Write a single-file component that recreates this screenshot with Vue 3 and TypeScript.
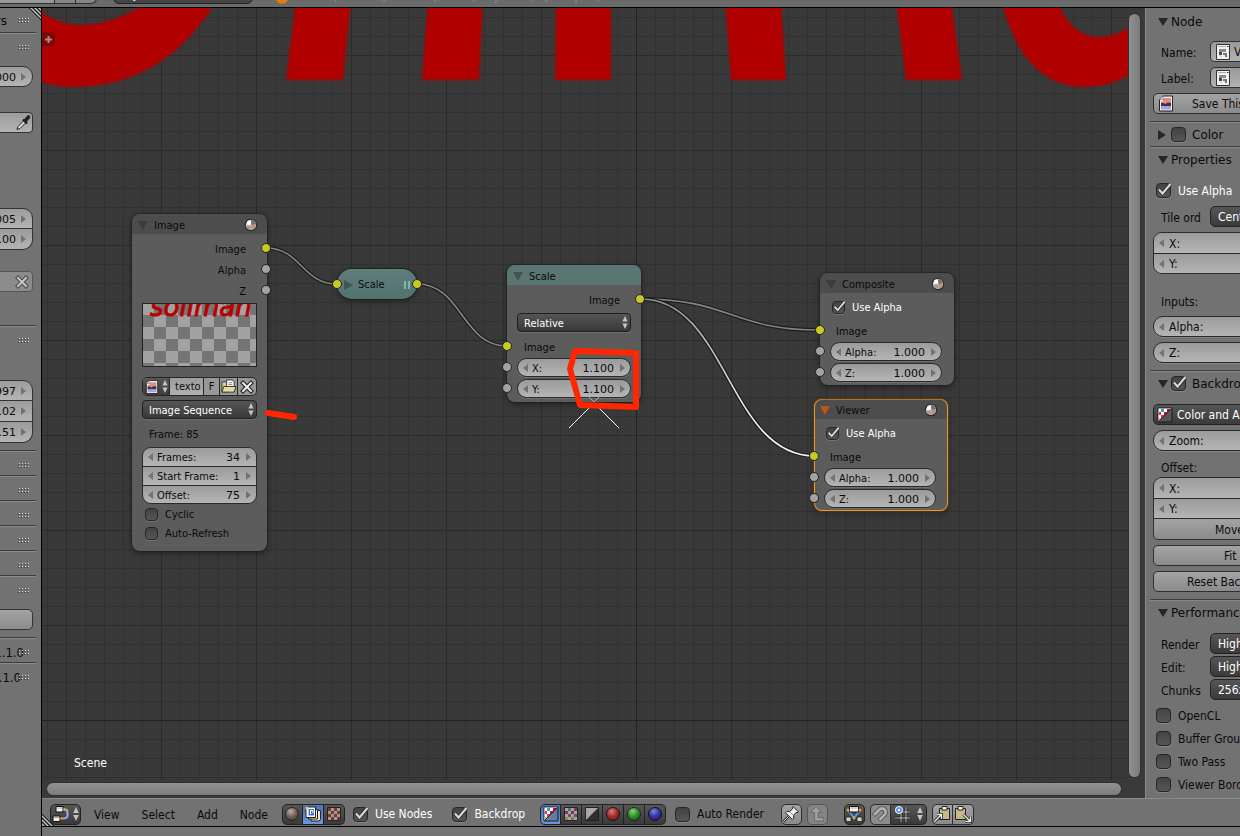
<script setup lang="ts">
import { reactive, ref } from 'vue'

interface NumField { id: string; label: string; value: string }

const leftTop = ref('1.000')
const leftPair = reactive<string[]>(['0.005', '6.00'])
const leftTriple = reactive<string[]>(['0.997', '4.02', '1.51'])
const emptySections = [1, 2, 3, 4, 5]

const nodes = {
  image: { x: 90, y: 206 },
  collapsed: { x: 295, y: 261 },
  scale: { x: 465, y: 257 },
  composite: { x: 778, y: 265 },
  viewer: { x: 772, y: 391 },
}
const at = (p: { x: number; y: number }) => ({ left: p.x + 'px', top: p.y + 'px' })

const sequence = reactive<NumField[]>([
  { id: 'frames', label: 'Frames:', value: '34' },
  { id: 'start', label: 'Start Frame:', value: '1' },
  { id: 'offset', label: 'Offset:', value: '75' },
])
const scale = reactive<NumField[]>([
  { id: 'sx', label: 'X:', value: '1.100' },
  { id: 'sy', label: 'Y:', value: '1.100' },
])
const outputs = reactive([
  {
    id: 'composite', title: 'Composite', pos: nodes.composite, active: false, alpha: true,
    fields: [
      { id: 'ca', label: 'Alpha:', value: '1.000' },
      { id: 'cz', label: 'Z:', value: '1.000' },
    ],
  },
  {
    id: 'viewer', title: 'Viewer', pos: nodes.viewer, active: true, alpha: true,
    fields: [
      { id: 'va', label: 'Alpha:', value: '1.000' },
      { id: 'vz', label: 'Z:', value: '1.000' },
    ],
  },
])
const links = [
  'M266 248C301 248 302 284 337 284',
  'M417 284C462 284 462 346 507 346',
  'M641 299C731 299 731 330 820 330',
  'M641 299C727 299 728 456 815 456',
]
const cyclic = ref(false)
const autoRefresh = ref(false)
const flags = reactive([
  { id: 'opencl', label: 'OpenCL', on: false },
  { id: 'buffer', label: 'Buffer Groups', on: false },
  { id: 'twopass', label: 'Two Pass', on: false },
  { id: 'border', label: 'Viewer Border', on: false },
])
const perf = [
  { id: 'render', label: 'Render', value: 'High' },
  { id: 'edit', label: 'Edit:', value: 'High' },
  { id: 'chunks', label: 'Chunks', value: '256x256' },
]
const menus = ['View', 'Select', 'Add', 'Node']
const channels = ['i-coloralpha', 'i-color', 'i-alpha', 'i-red', 'i-green', 'i-blue']
const treeTypes = ['i-material', 'i-compositing', 'i-texture']
const useNodes = ref(true)
const backdrop = ref(true)
const autoRender = ref(false)
const propAlpha = ref(true)
const panelColor = ref(false)
const panelBackdrop = ref(true)
</script>

<template>
  <div class="app">
    <svg class="defs" aria-hidden="true">
      <defs>
        <radialGradient id="g-mat" cx=".4" cy=".3" r=".8"><stop offset="0" stop-color="#b9aca6" /><stop offset=".5" stop-color="#7a625b" /><stop offset="1" stop-color="#3a2f2d" /></radialGradient>
        <radialGradient id="g-red" cx=".4" cy=".3" r=".8"><stop offset="0" stop-color="#d87a7a" /><stop offset=".5" stop-color="#a03030" /><stop offset="1" stop-color="#601616" /></radialGradient>
        <radialGradient id="g-green" cx=".4" cy=".3" r=".8"><stop offset="0" stop-color="#86d07a" /><stop offset=".5" stop-color="#31902e" /><stop offset="1" stop-color="#155a15" /></radialGradient>
        <radialGradient id="g-blue" cx=".4" cy=".3" r=".8"><stop offset="0" stop-color="#8080dc" /><stop offset=".5" stop-color="#3636a0" /><stop offset="1" stop-color="#1a1a60" /></radialGradient>
        <pattern id="p-checker" width="24" height="24" patternUnits="userSpaceOnUse"><rect width="24" height="24" fill="#a2a2a2" /><path d="M12 0h12v12H12zM0 12h12v12H0z" fill="#757575" /></pattern>
        <symbol id="i-ball" viewBox="0 0 14 14"><circle cx="7" cy="7" r="5.700" fill="#e9e5e2" stroke="#2a2a2a" stroke-width="1.200" /><path d="M7.500 7.200 12 6c.2 3-1.600 5.300-4.500 5.800z" fill="#c88a78" /><path d="M7.300 1.600C10 1.600 12 3.500 12.300 6L7.500 7.200C6.800 5 6.800 3 7.300 1.600z" fill="#7b7471" /><path d="M1.700 7.500 7.500 7.200V12C4.500 12.200 2 10.500 1.700 7.500z" fill="#a39c98" /><circle cx="5" cy="4.500" r="2" fill="#fff" /></symbol>
        <symbol id="i-updown" viewBox="0 0 6 14"><path d="M3 0 5.800 6H.2zM3 14 .2 8h5.600z" fill="#c4c4c4" /></symbol>
        <symbol id="i-image" viewBox="0 0 16 16"><path d="M5 .5h9.500v15h-13V4z" fill="#f4f0f0" stroke="#2a2020" /><path d="M5 2.500h8v6H3V6h2z" fill="#dd8f84" /><path d="M3 7.500h2.500l2 1 2-1.500 3.500 .5v3.500H3z" fill="#3d3350" /><path d="M3 10.500h10V14H3z" fill="#a5a5dc" /><path d="M1.500 4H5V.5z" fill="#fff" stroke="#555" stroke-width=".6" /></symbol>
        <symbol id="i-folder" viewBox="0 0 18 16"><path d="M2 3h5l1 2v9H2z" fill="#d9cc8e" stroke="#3b3520" /><path d="M7 1h6l2 2v9H7z" fill="#fff" stroke="#333" /><path d="M9 4h4M9 6h4" stroke="#777" /><path d="M4 8h13l-2 6H2z" fill="#e5d9a2" stroke="#3b3520" /></symbol>
        <symbol id="i-x" viewBox="0 0 14 14"><path d="M3 3 11 11M11 3 3 11" stroke="#222" stroke-width="4.200" stroke-linecap="square" /><path d="M3 3 11 11M11 3 3 11" stroke="#eee" stroke-width="2" stroke-linecap="square" /></symbol>
        <symbol id="i-node" viewBox="0 0 16 16"><path d="M1.500 .5h13v15h-13z" fill="#f2f2f2" stroke="#333" /><path d="M3 2.500h8" stroke="#aaa" /><path d="M12 2.500h1.500" stroke="#333" /><path d="M4 5h7v3H4z" fill="#8a8a8a" /><path d="M4 8h3v3H4z" fill="#444" /><path d="M8 9h4v4H10v-2H8z" fill="#777" /><path d="M4 11l3 2" stroke="#ccc" /></symbol>
        <symbol id="i-material" viewBox="0 0 16 16"><circle cx="8" cy="8" r="6.500" fill="url(#g-mat)" stroke="#262020" /></symbol>
        <symbol id="i-compositing" viewBox="0 0 16 16"><path d="M6 4.500h9.500v9L14 15H6z" fill="#ebe4c8" stroke="#222" /><path d="M3.500 3.500h9V13h-9z" fill="#f5f0dc" stroke="#222" /><path d="M1 1h9.500v10.500H1z" fill="#fff" stroke="#222" /><path d="M3.500 3h5.500v6.500H3.500z" fill="#3d77cc" /><path d="M5.500 8V4.500H8V7" stroke="#fff" fill="none" /><circle cx="2" cy="2" r="1.600" fill="#ffc845" /></symbol>
        <symbol id="i-texture" viewBox="0 0 16 16"><path d="M1.500 1.500h13v13h-13z" fill="#a59690" stroke="#2a2020" /><path d="M2 2h3v3H2zM8 2h3v3H8zM5 5h3v3H5zM11 5h3v3h-3zM2 8h3v3H2zM8 8h3v3H8zM5 11h3v3H5zM11 11h3v3h-3z" fill="#753c36" /></symbol>
        <symbol id="i-coloralpha" viewBox="0 0 16 16"><path d="M1 1h14v14H1z" fill="#6a6a6a" fill-opacity=".45" stroke="#1c1c1c" /><path d="M1.500 1.500h13l-13 13z" fill="#fff" /><path d="M4 2h3v3H4z" fill="#2fa0c8" /><path d="M10 2h3v1l-2 2h-1zM7 5h3v1L8 8H7z" fill="#c8102e" /><path d="M2 5h2v3H2z" fill="#d33" /><path d="M4 8h3v1l-2 2H4z" fill="#e03050" /><path d="M2 11h2l-2 2z" fill="#e0a020" /><path d="M14.500 1.500l-13 13" stroke="#222" /></symbol>
        <symbol id="i-color" viewBox="0 0 16 16"><path d="M1.500 1.500h13v13h-13z" fill="#a5a5a5" stroke="#262626" /><path d="M5 2h3v3H5z" fill="#3c7b90" /><path d="M11 2h3v3h-3zM8 5h3v3H8zM2 5h3v3H2z" fill="#90304a" /><path d="M5 8h3v3H5zM11 8h3v3h-3z" fill="#6b4d78" /><path d="M2 11h3v3H2z" fill="#a8823e" /><path d="M8 11h3v3H8z" fill="#74863a" /></symbol>
        <symbol id="i-alpha" viewBox="0 0 16 16"><path d="M1.500 1.500h13v13h-13z" fill="#2f2f2f" stroke="#222" /><path d="M2 2h12L2 14z" fill="#a9a9a9" /></symbol>
        <symbol id="i-red" viewBox="0 0 16 16"><circle cx="8" cy="8" r="6.500" fill="url(#g-red)" stroke="#2a1010" /></symbol>
        <symbol id="i-green" viewBox="0 0 16 16"><circle cx="8" cy="8" r="6.500" fill="url(#g-green)" stroke="#102a10" /></symbol>
        <symbol id="i-blue" viewBox="0 0 16 16"><circle cx="8" cy="8" r="6.500" fill="url(#g-blue)" stroke="#10102a" /></symbol>
        <symbol id="i-nodetree" viewBox="0 0 18 18"><path d="M11 4.500h2q2.500 0 2.500 3v3q0 3-5 3" fill="none" stroke="#94b4ea" stroke-width="2" /><path d="M4 1.500h7v5.500H4zM1 11h7v5.500H1z" fill="#eee" stroke="#111" /><path d="M5 3h5M2 12.500h5" stroke="#aaa" /><circle cx="12.500" cy="4.500" r="1.300" fill="#f5a21c" /><circle cx="9.500" cy="13.500" r="1.300" fill="#f5a21c" /></symbol>
        <symbol id="i-pin" viewBox="0 0 18 18"><path d="M1.500 16.500 7 11" stroke="#222" stroke-width="2.400" /><path d="M1.500 16.500 7 11" stroke="#ddd" /><path d="M11 1.500 16.500 7l-1.500.8-1-.3-2.500 3 .3 2.500-1.500 1.500L3.500 7.800 5 6.300l2.500.3 3-2.600-.3-1.200z" fill="#ededed" stroke="#222" /><path d="m8 7 3 3" stroke="#999" /></symbol>
        <symbol id="i-up" viewBox="0 0 18 18"><path d="M8 1.500 13.500 7.500H10v5h5.500v3.500H6.500v-8.500h-4z" fill="#a0a0a0" stroke="#696969" /></symbol>
        <symbol id="i-insert" viewBox="0 0 18 18"><path d="M3 5l6 8 6-8" fill="none" stroke="#5d94e8" stroke-width="2" /><path d="M4.500 1.500h9v5.500h-9z" fill="#f1f1f1" stroke="#111" /><path d="M6 3h6" stroke="#aaa" /><path d="M1 12h5v4.500H1zM12 12h5v4.500h-5z" fill="#cfcfcf" stroke="#222" stroke-width=".8" /><circle cx="3" cy="5" r="1.500" fill="#f5a21c" /><circle cx="15" cy="5" r="1.500" fill="#f5a21c" /><circle cx="9" cy="13" r="1.400" fill="#f5a21c" /></symbol>
        <symbol id="i-magnet" viewBox="0 0 18 18"><path d="M2.500 10.500 8 5c4-4 9 1 5.500 5L8 15.500" fill="none" stroke="#555" stroke-width="4.500" /><path d="M3 10 8 5c4-4 9 1 5.500 5L8.500 15" fill="none" stroke="#b4b4b4" stroke-width="2.500" /></symbol>
        <symbol id="i-snap" viewBox="0 0 18 18"><path d="M8 2v15M13 2v15M2 7h15M2 13h15" stroke="#111" stroke-width="2.400" /><path d="M8 2v15M13 2v15M2 7h15M2 13h15" stroke="#ccc" /><circle cx="6" cy="5" r="3.500" fill="#4a8ae8" stroke="#fff" /><circle cx="6" cy="5" r="1.300" fill="#fff" /></symbol>
        <symbol id="i-copy" viewBox="0 0 18 18"><path d="M6.500 3.500h10v11h-10z" fill="#c9b98a" stroke="#222" /><path d="M9 1.500h5v3.500H9z" fill="#f4f4f4" stroke="#222" /><path d="M1.500 16.500 8 10M4 9.500h4.500V14" fill="none" stroke="#222" stroke-width="3" /><path d="M1.500 16.500 8 10M4 9.500h4.500V14" fill="none" stroke="#f0f0f0" stroke-width="1.400" /></symbol>
        <symbol id="i-paste" viewBox="0 0 18 18"><path d="M1.500 3.500h10v11h-10z" fill="#c9b98a" stroke="#222" /><path d="M4 1.500h5v3.500H4z" fill="#f4f4f4" stroke="#222" /><path d="M9.500 9.500 16 16M16.500 11.500V16.500H11.500" fill="none" stroke="#222" stroke-width="3" /><path d="M9.500 9.500 16 16M16.500 11.500V16.500H11.500" fill="none" stroke="#f0f0f0" stroke-width="1.400" /></symbol>
        <symbol id="i-dropper" viewBox="0 0 16 16"><path d="M2 14.500 3 11.500 9 5.500l2 2-6 6z" fill="#ddd" stroke="#222" /><path d="m8 4.500 4 4" stroke="#111" stroke-width="2.200" /><path d="m10.500 5.500 3-3.500" stroke="#222" stroke-width="3.600" stroke-linecap="round" /></symbol>
        <symbol id="i-hatch" viewBox="0 0 12 12"><path d="M0 0 12 12M4 0 12 8M8 0 12 4" stroke="#1c1c1c" /><path d="M2 0 12 10M6 0 12 6M10 0 12 2" stroke="#c6c6c6" /></symbol>
        <symbol id="i-hatch-low" viewBox="0 0 12 12"><path d="M0 0 12 12M0 4 8 12M0 8 4 12" stroke="#1c1c1c" /><path d="M0 2 10 12M0 6 6 12M0 10 2 12" stroke="#c6c6c6" /></symbol>
        <symbol id="i-grip" viewBox="0 0 12 6"><path d="M0 1.500h11M0 4.500h11" stroke="#3a3a3a" stroke-dasharray="1 2" /><path d="M1 .5h11M1 3.500h11" stroke="#d6d6d6" stroke-dasharray="1 2" /></symbol>
        <symbol id="i-check" viewBox="0 0 18 18"><path d="M4 8.500 7.500 12.500 15.500 3" fill="none" stroke="#222" stroke-width="3.600" /><path d="M4 8.500 7.500 12.500 15.500 3" fill="none" stroke="#d8d8d8" stroke-width="2.200" /></symbol>
      </defs>
    </svg>

    <header class="top">
      <div class="top-row">
        <span class="t-scene"></span><span class="t-btn"></span><span class="t-btn t-end"></span>
        <span class="t-engine">Cycles Render</span>
        <span class="t-logo"></span>
        <span class="t-info">v2.77 | Verts:0 | Faces:0 | Tris:0 | Objects:0/2 | Lamps:0/1</span>
      </div>
    </header>

    <div class="body">
      <aside class="left">
        <svg class="hatch" width="12" height="12"><use href="#i-hatch" /></svg>
        <div class="left-in">
          <div class="sec first"><span class="big">rs</span><svg class="grip" width="12" height="6"><use href="#i-grip" /></svg></div>
          <div class="sec"><svg class="grip" width="12" height="6"><use href="#i-grip" /></svg></div>
          <div class="lgroup a"><div class="lnum"><input v-model="leftTop" aria-label="Value" /><i class="ar"></i></div></div>
          <div class="lgroup b"><div class="lnum flat"><svg width="16" height="16"><use href="#i-dropper" /></svg></div></div>
          <div class="lgroup c">
            <div v-for="(v, i) in leftPair" :key="i" class="lnum"><input v-model="leftPair[i]" aria-label="Value" /><i class="ar"></i></div>
          </div>
          <div class="lgroup d"><div class="lnum flat faded"><svg width="14" height="14"><use href="#i-x" /></svg></div></div>
          <div class="sec"><svg class="grip" width="12" height="6"><use href="#i-grip" /></svg></div>
          <div class="lgroup e">
            <div v-for="(v, i) in leftTriple" :key="i" class="lnum"><input v-model="leftTriple[i]" aria-label="Value" /><i class="ar"></i></div>
          </div>
          <div v-for="n in emptySections" :key="n" class="sec"><svg class="grip" width="12" height="6"><use href="#i-grip" /></svg></div>
          <div class="sec"><svg class="grip" width="12" height="6"><use href="#i-grip" /></svg></div>
          <div class="lgroup f"><button class="lbtn" aria-label="Add"></button></div>
          <div class="sec"><span class="ver">1.1.0</span><svg class="grip" width="12" height="6"><use href="#i-grip" /></svg></div>
          <div class="sec"><span class="ver v2">1.1.0</span><svg class="grip" width="12" height="6"><use href="#i-grip" /></svg></div>
        </div>
      </aside>

      <section class="editor">
        <div class="work">
          <div class="canvas">
            <div class="viewport">
              <svg class="layer">
                <g transform="translate(-42 -8)">
                  <path d="M636.500 0v900M0 720.500h1400" stroke="#232323" fill="none" />
                  <g class="backdrop">
                    <path d="M30 0H42V12C64 29 96 31 139 8L150 0H218L212 8C182 54 138 87 73 87Q54 87 30 79z" />
                    <path d="M296 0h55l-8 80h-57zM428 0h55l-4 80h-57zM556 0h55v80h-56zM725 0h56l5 80h-55zM896 0h55l11 80h-56z" />
                    <path d="M1001 0h56C1066 26 1084 38 1101 37Q1120 36 1140 20V68Q1114 87 1086 87C1038 87 1014 50 1001 0z" />
                  </g>
                </g>
              </svg>
              <button class="plus" aria-label="Show tool shelf">
                <svg width="9" height="9"><path d="M4.500 1v7M1 4.500h7" stroke="#b98484" stroke-width="2" /></svg>
              </button>

              <svg class="layer">
                <defs>
                  <linearGradient id="g-link" gradientUnits="userSpaceOnUse" x1="641" y1="299" x2="760" y2="420"><stop offset="0" stop-color="#8a8a8a" /><stop offset="1" stop-color="#f6f6f6" /></linearGradient>
                </defs>
                <g transform="translate(-42 -8)" fill="none">
                  <g v-for="(d, i) in links" :key="d">
                    <path :d="d" stroke="#1d1d1d" stroke-width="4" />
                    <path :d="d" :stroke="i === 3 ? 'url(#g-link)' : '#858585'" stroke-width="1.600" />
                  </g>
                </g>
              </svg>

              <article class="node wide" :style="at(nodes.image)">
                <h2 class="nhead"><i class="tri"></i>Image<svg class="ball" width="14" height="14"><use href="#i-ball" /></svg></h2>
                <div class="nbody image-body">
                  <div class="sock-row out">Image<i class="sock o y"></i></div>
                  <div class="sock-row out">Alpha<i class="sock o"></i></div>
                  <div class="sock-row out">Z<i class="sock o"></i></div>
                  <svg class="preview" width="115" height="64">
                    <rect width="115" height="64" fill="url(#p-checker)" />
                    <text x="8" y="13" class="thumb">soliman</text>
                    <rect x=".5" y=".5" width="114" height="63" fill="none" stroke="#222" />
                  </svg>
                  <div class="idrow">
                    <button class="dark" aria-label="Browse image"><svg width="14" height="14"><use href="#i-image" /></svg><svg width="6" height="13"><use href="#i-updown" /></svg></button>
                    <input value="texto" aria-label="Image name" />
                    <button class="fbtn">F</button>
                    <button aria-label="Open"><svg width="17" height="15"><use href="#i-folder" /></svg></button>
                    <button aria-label="Unlink"><svg width="14" height="14"><use href="#i-x" /></svg></button>
                  </div>
                  <div class="menu seq">
                    <select aria-label="Source"><option>Image Sequence</option></select>
                    <svg width="6" height="13"><use href="#i-updown" /></svg>
                  </div>
                  <p class="frame">Frame: 85</p>
                  <div class="stack">
                    <label v-for="f in sequence" :key="f.id" class="num"><i class="al"></i><span>{{ f.label }}</span><input v-model="f.value" /><i class="ar"></i></label>
                  </div>
                  <label class="check"><span class="box"><input v-model="cyclic" type="checkbox" /><svg><use href="#i-check" /></svg></span>Cyclic</label>
                  <label class="check"><span class="box"><input v-model="autoRefresh" type="checkbox" /><svg><use href="#i-check" /></svg></span>Auto-Refresh</label>
                </div>
              </article>

              <article class="pill" :style="at(nodes.collapsed)">
                <i class="sock l y"></i><i class="tri side"></i><span>Scale</span><i class="bars"></i><i class="sock r y"></i>
              </article>

              <article class="node" :style="at(nodes.scale)">
                <h2 class="nhead teal"><i class="tri"></i>Scale</h2>
                <div class="nbody scale-body">
                  <div class="sock-row out">Image<i class="sock o y"></i></div>
                  <div class="menu">
                    <select aria-label="Space"><option>Relative</option></select>
                    <svg width="6" height="13"><use href="#i-updown" /></svg>
                  </div>
                  <div class="sock-row in">Image<i class="sock i y"></i></div>
                  <div v-for="f in scale" :key="f.id" class="sock-row">
                    <label class="num round"><i class="al"></i><span>{{ f.label }}</span><input v-model="f.value" /><i class="ar"></i></label>
                    <i class="sock i"></i>
                  </div>
                </div>
              </article>

              <article v-for="n in outputs" :key="n.id" class="node" :class="{ active: n.active }" :style="at(n.pos)">
                <h2 class="nhead"><i class="tri"></i>{{ n.title }}<svg class="ball" width="14" height="14"><use href="#i-ball" /></svg></h2>
                <div class="nbody out-body">
                  <label class="check white"><span class="box"><input v-model="n.alpha" type="checkbox" /><svg><use href="#i-check" /></svg></span>Use Alpha</label>
                  <div class="sock-row in">Image<i class="sock i y"></i></div>
                  <div v-for="f in n.fields" :key="f.id" class="sock-row">
                    <label class="num round"><i class="al"></i><span>{{ f.label }}</span><input v-model="f.value" /><i class="ar"></i></label>
                    <i class="sock i"></i>
                  </div>
                </div>
              </article>

              <svg class="layer">
                <g transform="translate(-42 -8)" fill="none">
                  <path d="M569 428 594 403 619 428" stroke="#fff" />
                  <path d="M589 397 594 402 599 397" stroke="#aaa" />
                  <path d="M575 351 636 353V407L580 405 570 369z" stroke="#ff2600" stroke-width="6" stroke-linejoin="round" />
                  <path d="M268 413 294 417" stroke="#ff2600" stroke-width="6" stroke-linecap="round" />
                </g>
              </svg>
              <span class="scene">Scene</span>
            </div>
            <div class="hscroll"><div class="hbar"></div></div>
          </div>
          <div class="vscroll"><div class="vbar"></div></div>

          <aside class="props">
            <div class="props-in">
              <section class="panel">
                <h3><i class="ptri"></i>Node</h3>
                <div class="pbody p1">
                  <label class="prow"><span>Name:</span><span class="tfield"><svg width="16" height="16"><use href="#i-node" /></svg><input value="Viewer" /></span></label>
                  <label class="prow"><span>Label:</span><span class="tfield"><svg width="16" height="16"><use href="#i-node" /></svg><input value="" /></span></label>
                  <button class="pbtn save"><svg width="16" height="17"><use href="#i-image" /></svg>Save This</button>
                </div>
              </section>
              <section class="panel">
                <h3><i class="ptri closed"></i><label class="check head"><span class="box"><input v-model="panelColor" type="checkbox" /><svg><use href="#i-check" /></svg></span>Color</label></h3>
              </section>
              <section class="panel">
                <h3><i class="ptri"></i>Properties</h3>
                <div class="pbody">
                  <label class="check white"><span class="box"><input v-model="propAlpha" type="checkbox" /><svg><use href="#i-check" /></svg></span>Use Alpha</label>
                  <label class="prow"><span>Tile ord</span><select class="psel"><option>Center</option></select></label>
                  <div class="stack">
                    <label class="num"><i class="al"></i><span>X:</span><input value="" /></label>
                    <label class="num"><i class="al"></i><span>Y:</span><input value="" /></label>
                  </div>
                  <p class="ptext inputs">Inputs:</p>
                  <label class="num round"><i class="al"></i><span>Alpha:</span><input value="" /></label>
                  <label class="num round"><i class="al"></i><span>Z:</span><input value="" /></label>
                </div>
              </section>
              <section class="panel">
                <h3><i class="ptri"></i><label class="check head"><span class="box"><input v-model="panelBackdrop" type="checkbox" /><svg><use href="#i-check" /></svg></span>Backdrop</label></h3>
                <div class="pbody">
                  <div class="iconsel"><svg width="16" height="16"><use href="#i-coloralpha" /></svg><select aria-label="Channels"><option>Color and Alpha</option></select></div>
                  <label class="num round"><i class="al"></i><span>Zoom:</span><input value="" /></label>
                  <div>
                    <p class="ptext">Offset:</p>
                    <div class="stack open">
                      <label class="num"><i class="al"></i><span>X:</span><input value="" /></label>
                      <label class="num"><i class="al"></i><span>Y:</span><input value="" /></label>
                    </div>
                    <button class="pbtn move">Move</button>
                  </div>
                  <button class="pbtn fit">Fit</button>
                  <button class="pbtn reset">Reset Backdrop</button>
                </div>
              </section>
              <section class="panel">
                <h3><i class="ptri"></i>Performance</h3>
                <div class="pbody tight">
                  <label v-for="p in perf" :key="p.id" class="prow"><span>{{ p.label }}</span><select class="psel"><option>{{ p.value }}</option></select></label>
                  <div class="flags">
                    <label v-for="f in flags" :key="f.id" class="check"><span class="box"><input v-model="f.on" type="checkbox" /><svg><use href="#i-check" /></svg></span>{{ f.label }}</label>
                  </div>
                </div>
              </section>
            </div>
          </aside>
        </div>

        <nav class="toolbar">
          <svg class="hatch low" width="12" height="12"><use href="#i-hatch-low" /></svg>
          <button class="tb dark editor-type" aria-label="Editor type"><svg width="18" height="18"><use href="#i-nodetree" /></svg><svg width="6" height="14"><use href="#i-updown" /></svg></button>
          <div class="menus"><button v-for="m in menus" :key="m">{{ m }}</button></div>
          <div class="group">
            <button v-for="(t, i) in treeTypes" :key="t" class="tb dark" :class="{ on: i === 1 }" :aria-label="t.slice(2)"><svg width="16" height="16"><use :href="'#' + t" /></svg></button>
          </div>
          <label class="check white c1"><span class="box"><input v-model="useNodes" type="checkbox" /><svg><use href="#i-check" /></svg></span>Use Nodes</label>
          <label class="check white c2"><span class="box"><input v-model="backdrop" type="checkbox" /><svg><use href="#i-check" /></svg></span>Backdrop</label>
          <div class="group g2">
            <button v-for="(t, i) in channels" :key="t" class="tb dark" :class="{ on: i === 0 }" :aria-label="t.slice(2)"><svg width="16" height="16"><use :href="'#' + t" /></svg></button>
          </div>
          <label class="check c3"><span class="box"><input v-model="autoRender" type="checkbox" /><svg><use href="#i-check" /></svg></span>Auto Render</label>
          <div class="tools">
            <button class="tb" aria-label="Pin"><svg width="18" height="18"><use href="#i-pin" /></svg></button>
            <button class="tb faint" aria-label="Parent"><svg width="18" height="18"><use href="#i-up" /></svg></button>
            <button class="tb dark ins" aria-label="Auto offset"><svg width="18" height="18"><use href="#i-insert" /></svg></button>
            <div class="group">
              <button class="tb mag" aria-label="Snap"><svg width="18" height="18"><use href="#i-magnet" /></svg></button>
              <button class="tb dark snap" aria-label="Snap element"><svg width="18" height="18"><use href="#i-snap" /></svg><svg width="6" height="14"><use href="#i-updown" /></svg></button>
            </div>
            <div class="group">
              <button class="tb" aria-label="Copy"><svg width="18" height="18"><use href="#i-copy" /></svg></button>
              <button class="tb" aria-label="Paste"><svg width="18" height="18"><use href="#i-paste" /></svg></button>
            </div>
          </div>
        </nav>
        <div class="foot"></div>
      </section>
    </div>
  </div>
</template>

<style>
body { margin: 0; background: #727272; }
</style>

<style scoped>
* { box-sizing: border-box; }
.app { min-height: 100vh; display: flex; flex-direction: column; overflow: hidden; background: #727272; color: #0a0a0a; font-family: "DejaVu Sans Condensed", "DejaVu Sans", sans-serif; font-size: 12px; white-space: nowrap; }
.defs { position: absolute; width: 0; height: 0; }
button, input, select { font: inherit; color: inherit; margin: 0; padding: 0; border: 0; background: none; min-width: 0; border-radius: 0; outline: none; }
select { appearance: none; }
h2, h3, p { margin: 0; font-weight: normal; }
svg { display: block; flex: none; }
i { display: block; flex: none; }

.top { height: 8px; display: flex; align-items: flex-end; overflow: hidden; background: #6b6b6b; border-bottom: 1px solid #000; }
.top-row { display: flex; align-items: flex-end; height: 24px; padding-bottom: 3px; }
.top-row span { height: 21px; flex: none; }
.t-scene { width: 55px; background: #989898; border: 1px solid #2e2e2e; border-left: 0; }
.t-btn { width: 21px; background: #858585; border: 1px solid #2e2e2e; border-left: 0; }
.t-end { border-radius: 0 0 6px 0; }
.t-engine { width: 140px; margin-left: 16px; padding-left: 11px; line-height: 21px; color: #fff; background: #454545; border: 1px solid #222; border-radius: 6px; }
.t-logo { width: 12px; margin-left: 23px; background: #e27d12; border-radius: 6px; }
.t-info { margin-left: 12px; line-height: 26px; color: #8c8c8c; }

.body { flex: 1; display: flex; }
.left { position: relative; width: 42px; flex: none; display: flex; justify-content: flex-end; overflow: hidden; border-right: 1px solid #000; background: #727272; }
.left-in { width: 72px; flex: none; padding-right: 5px; }
.hatch { position: absolute; right: 0; top: 0; }
.hatch.low { right: auto; left: 0; top: auto; bottom: 0; }
.sec { height: 25px; display: flex; align-items: center; justify-content: flex-end; padding: 5px 6px 0 0; border-top: 1px solid #3c3c3c; box-shadow: inset 0 1px #8c8c8c; }
.sec.first { height: 24px; padding-top: 2px; border: 0; box-shadow: none; }
.big { font-family: "DejaVu Sans", sans-serif; margin-right: 11px; }
.ver { margin-right: -6px; font-size: 13px; }
.ver.v2 { margin-right: -3px; }
.lgroup { padding-right: 3px; }
.a { padding-top: 9px; }
.b { padding-top: 25px; }
.c { padding-top: 75px; }
.d { padding-top: 21px; padding-bottom: 33px; }
.e { padding-top: 30px; padding-bottom: 7px; }
.f { padding-top: 9px; padding-bottom: 7px; }
.lnum { height: 21px; display: flex; align-items: center; justify-content: flex-end; gap: 5px; padding-right: 6px; background: linear-gradient(#9c9c9c, #b4b4b4); border: 1px solid #333; }
.lnum + .lnum { border-top: 0; }
.lnum:first-child { border-top-right-radius: 10px; }
.lnum:last-child { border-bottom-right-radius: 10px; }
.lnum input { width: 50px; padding-top: 1px; text-align: right; font-family: "DejaVu Sans", sans-serif; font-size: 11px; }
.lnum.flat { border-radius: 4px; padding-right: 1px; }
.lnum.faded { padding-right: 3px; background: #8c8c8c; border-color: #565656; }
.lnum.faded svg { opacity: .6; }
.lbtn { display: block; width: 100%; height: 21px; border: 1px solid #333; border-radius: 5px; background: linear-gradient(#a3a3a3, #8b8b8b); }

.ar { width: 0; border: solid transparent; border-width: 4px 0 4px 5px; border-left-color: #727272; }
.al { width: 0; border: solid transparent; border-width: 4px 5px 4px 0; border-right-color: #727272; }

.editor { flex: 1; min-width: 0; display: flex; flex-direction: column; }
.work { flex: 1; display: flex; background: #3a3a3a; }
.canvas { flex: 1; min-width: 0; display: flex; flex-direction: column; }
.viewport { position: relative; flex: 1; overflow: hidden; font-size: 11px; background-color: #393939;
  background-image: linear-gradient(90deg, #2b2b2b 1px, transparent 1px), linear-gradient(#2b2b2b 1px, transparent 1px), linear-gradient(90deg, #313131 1px, transparent 1px), linear-gradient(#313131 1px, transparent 1px);
  background-size: 95px 95px, 95px 95px, 19px 19px, 19px 19px;
  background-position: 24px 0, 0 47px, 5px 0, 0 9px; }
.layer { position: absolute; inset: 0; width: 100%; height: 100%; pointer-events: none; }
.backdrop { fill: #b10000; filter: blur(1px); }
.plus { position: absolute; left: 0; top: 24px; width: 13px; height: 14px; padding-left: 2px; background: #780a0a; border-radius: 0 4px 4px 0; }
.scene { position: absolute; left: 32px; bottom: 10px; font-size: 12px; color: #fff; }
.hscroll { height: 18px; padding: 3px 7px 0 5px; }
.hbar { height: 12px; border-radius: 6px; background: linear-gradient(#939393, #7c7c7c); box-shadow: 0 0 0 1px #303030; }
.vscroll { width: 17px; flex: none; padding: 6px 5px 21px 1px; }
.vbar { height: 100%; border-radius: 6px; background: linear-gradient(90deg, #8f8f8f, #7c7c7c); box-shadow: 0 0 0 1px #303030; }

.node { position: absolute; width: 134px; border-radius: 8px; background: rgba(98, 98, 98, .86); box-shadow: 0 0 0 1px rgba(30, 30, 30, .55), 0 2px 6px rgba(0, 0, 0, .45); }
.node.wide { width: 135px; }
.node.active { box-shadow: inset 0 0 0 1px #e39a33, 0 0 2px 1px rgba(120, 70, 10, .6), 0 2px 6px rgba(0, 0, 0, .4); }
.nhead { height: 20px; display: flex; align-items: center; padding: 2px 9px 0 6px; font-size: 11px; border-radius: 8px 8px 0 0; background: rgba(50, 50, 50, .35); }
.active .nhead { margin: 0 1px; padding-left: 5px; }
.teal { background: #5a7572; }
.tri { width: 0; border: solid transparent; border-width: 9px 5px 0; border-top-color: #3c3c3c; margin-right: 6px; }
.teal .tri { border-top-color: #405452; }
.active .tri { border-top-color: #c05414; }
.ball { margin-left: auto; }
.nbody { display: flex; flex-direction: column; }
.image-body { padding: 4px 10px 9px; }
.scale-body { padding: 4px 10px 3px; }
.out-body { padding: 4px 12px 2px 10px; }
.sock-row { position: relative; height: 21px; display: flex; align-items: center; }
.sock-row.out { justify-content: flex-end; padding: 1px 11px 0 0; }
.sock-row.in { padding: 1px 0 0 7px; }
.out-body .sock-row.in { padding-left: 6px; }
.sock { position: absolute; width: 10px; height: 10px; top: 5px; border: 1px solid #222; border-radius: 5px; background: #a3a3a3; }
.sock.o { right: -14px; }
.sock.i { left: -15px; }
.sock.y { background: #c9c926; }
.preview { margin: 2px 0 10px; }
.thumb { font-family: "DejaVu Sans", sans-serif; font-style: italic; font-size: 26px; fill: #b80000; stroke: #b80000; }
.idrow { height: 19px; display: flex; border: 1px solid #262626; border-radius: 5px; overflow: hidden; background: #989898; }
.idrow > * { display: flex; align-items: center; justify-content: center; height: 17px; flex: none; border-left: 1px solid #262626; }
.idrow > .dark { width: 26px; gap: 3px; border-left: 0; }
.idrow input { width: 34px; padding-left: 5px; background: linear-gradient(#9c9c9c, #b0b0b0); }
.idrow .fbtn { width: 16px; }
.idrow button:nth-child(4) { width: 18px; }
.idrow button:nth-child(5) { flex: 1; }
.dark { background: linear-gradient(#585858, #3b3b3b); }
.menu { position: relative; height: 19px; margin: 3px 0 4px; display: flex; border: 1px solid #1f1f1f; border-radius: 4px; color: #fff; background: linear-gradient(#555, #393939); box-shadow: 0 1px rgba(255, 255, 255, .12); }
.menu.seq { margin: 4px 0 6px; }
.menu select { flex: 1; padding: 1px 0 0 6px; }
.menu svg { position: absolute; right: 2px; top: 2px; }
.frame { height: 19px; line-height: 19px; margin-bottom: 3px; padding-left: 7px; }
.num { flex: 1; height: 19px; display: flex; align-items: center; padding: 0 5px; background: linear-gradient(#9b9b9b, #b5b5b5); }
.num span { margin-left: 4px; padding-top: 1px; }
.num input { flex: 1; width: 20px; padding-top: 1px; margin-right: 6px; text-align: right; font-family: "DejaVu Sans", sans-serif; font-size: 11px; }
.num.round { border: 1px solid #2a2a2a; border-radius: 10px; box-shadow: 0 1px rgba(255, 255, 255, .12); }
.stack { border: 1px solid #2a2a2a; border-radius: 9px; overflow: hidden; display: flex; flex-direction: column; }
.stack .num { flex: none; }
.stack .num + .num { border-top: 1px solid #2a2a2a; }
.stack .num:first-child, .stack .num:last-child { height: 18px; }
.sock-row .num.round { height: 19px; }

.check { display: flex; align-items: center; height: 21px; padding-left: 3px; gap: 7px; }
.check.white { color: #fff; }
.nbody .check { height: 19px; padding: 1px 0 0 3px; }
.out-body .check { height: 20px; margin-bottom: 3px; padding: 0 0 0 2px; }
.box { position: relative; width: 15px; height: 15px; flex: none; }
.nbody .box { width: 13px; height: 13px; }
.box input { display: block; width: 100%; height: 100%; appearance: none; border: 1px solid #262626; border-radius: 4px; background: linear-gradient(#434343, #565656); box-shadow: 0 1px rgba(255, 255, 255, .15); }
.box svg { position: absolute; left: -1px; top: -2px; width: 18px; height: 18px; display: none; pointer-events: none; }
.nbody .box svg { width: 16px; height: 16px; }
.box input:checked + svg { display: block; }

.pill { position: absolute; width: 80px; height: 30px; display: flex; align-items: center; padding: 1px 7px 0; border-radius: 15px; background: linear-gradient(#5f7d7b, #527270); box-shadow: 0 0 0 1px rgba(25, 25, 25, .7), 0 2px 6px rgba(0, 0, 0, .4); }
.pill .sock { top: 10px; }
.sock.l { left: -5px; }
.sock.r { right: -5px; }
.tri.side { border-width: 5px 0 5px 9px; border-color: transparent; border-left-color: #405452; margin-right: 5px; }
.bars { width: 6px; height: 8px; margin-left: auto; border: solid #86b3b2; border-width: 0 2px; }

.props { width: 95px; flex: none; overflow: hidden; background: #727272; border-left: 1px solid #8a8a8a; }
.props-in { width: 190px; }
.panel { border-top: 1px solid #3c3c3c; margin-left: 4px; box-shadow: inset 0 1px #878787; }
.panel:first-child { border-top-color: transparent; box-shadow: none; }
.panel h3 { height: 24px; display: flex; align-items: center; padding: 1px 0 0 8px; font-family: "DejaVu Sans", sans-serif; font-size: 12px; }
.ptri { width: 0; border: solid transparent; border-width: 8px 5px 0; border-top-color: #262626; margin-right: 3px; }
.ptri.closed { border-width: 5px 0 5px 8px; border-color: transparent; border-left-color: #262626; margin-right: 5px; }
.check.head { padding-left: 0; gap: 6px; }
.pbody { display: flex; flex-direction: column; gap: 5px; padding: 9px 0 7px 3px; }
.pbody.p1 { padding-top: 8px; }
.pbody.tight { gap: 2px; padding-bottom: 2px; }
.flags { display: flex; flex-direction: column; gap: 2px; padding-top: 3px; }
.prow { height: 21px; display: flex; align-items: center; }
.prow > span:first-child { width: 57px; padding: 2px 0 0 8px; flex: none; }
.tfield { flex: 1; height: 21px; display: flex; align-items: center; gap: 3px; padding-left: 4px; border: 1px solid #303030; border-radius: 5px; background: linear-gradient(#999, #b2b2b2); }
.tfield input { flex: 1; }
.psel { flex: 1; height: 21px; padding: 1px 0 0 7px; color: #fff; border: 1px solid #222; border-radius: 5px; background: linear-gradient(#565656, #3a3a3a); }
.pbtn { display: flex; align-items: center; width: 100%; height: 21px; padding-top: 1px; border: 1px solid #303030; border-radius: 5px; background: linear-gradient(#a3a3a3, #8b8b8b); }
.save { gap: 18px; padding: 0 0 0 4px; }
.fit { padding-left: 70px; }
.reset { padding-left: 33px; }
.move { padding-left: 61px; border-top: 0; border-radius: 0 0 5px 5px; }
.props .num { flex: none; height: 21px; padding-left: 5px; }
.props .num span { margin-left: 5px; }
.props .stack .num { height: 20px; }
.stack.open { border-radius: 9px 9px 0 0; }
.ptext { height: 21px; line-height: 24px; padding-left: 8px; }
.inputs { margin-top: 11px; }
.iconsel { height: 21px; display: flex; align-items: center; gap: 4px; padding-left: 3px; color: #fff; border: 1px solid #222; border-radius: 5px; background: linear-gradient(#565656, #3a3a3a); }
.iconsel select { flex: 1; padding-top: 1px; }

.toolbar { position: relative; height: 28px; flex: none; display: flex; align-items: center; padding: 3px 0 0 8px; background: #727272; border-top: 1px solid #8a8a8a; }
.tb { width: 21px; height: 21px; display: flex; align-items: center; justify-content: center; border: 1px solid #2e2e2e; border-radius: 5px; background-image: linear-gradient(#a3a3a3, #8b8b8b); }
.tb.dark { background-image: linear-gradient(#565656, #3a3a3a); border-color: #222; }
.tb.on { background-image: linear-gradient(#4b74b4, #6a97da); }
.tb.editor-type { width: 31px; gap: 3px; }
.tb.faint { background-image: none; background-color: #848484; border-color: #555; }
.tb.mag { background-image: none; background-color: #8c8c8c; }
.tb.snap { width: 36px; gap: 6px; }
.group { display: flex; }
.group .tb { border-radius: 0; }
.group .tb + .tb { border-left-width: 0; }
.group .tb:first-child { border-radius: 5px 0 0 5px; }
.group .tb:last-child { border-radius: 0 5px 5px 0; }
.menus { display: flex; gap: 22px; margin: 0 14px 0 13px; padding-top: 1px; }
.toolbar .check { padding: 0; }
.c1 { margin-left: 8px; }
.c2 { margin-left: 20px; }
.g2 { margin-left: 15px; }
.c3 { margin-left: 9px; }
.tools { display: flex; gap: 5px; margin-left: 17px; }
.ins { margin-left: 11px; }
.foot { height: 10px; flex: none; border-top: 1px solid #000; background: #747474; }
</style>
